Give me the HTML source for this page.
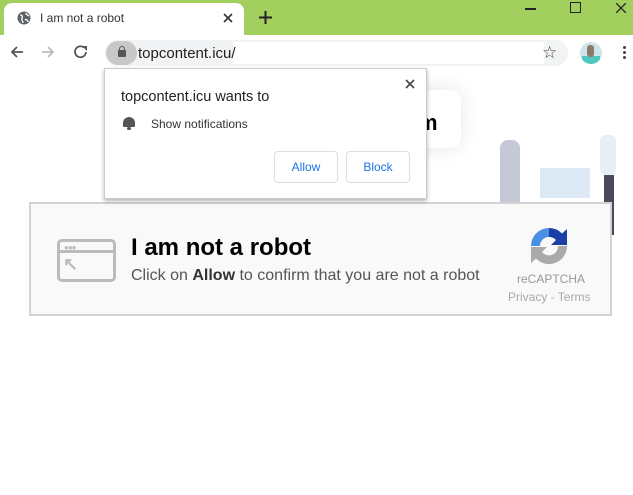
<!DOCTYPE html><html><head><style>
body{margin:0;width:633px;height:495px;position:relative;overflow:hidden;background:#fff;font-family:"Liberation Sans",Arial,sans-serif}
.a{position:absolute}
</style></head><body>
<div class="a" style="left:0;top:0;width:633px;height:35px;background:#a3cf5f"></div>
<div class="a" style="left:4px;top:3px;width:240px;height:32px;background:#fff;border-radius:8px 8px 0 0"></div>
<svg class="a" style="left:17px;top:11px" width="14" height="14" viewBox="0 0 14 14"><circle cx="7" cy="7" r="6.5" fill="#5f6368"/><path d="M3 4c2 0 3 1 2 3s1 3 1 5M9 2c0 2 2 2 3 3M8 9c1-1 3 0 3 2" stroke="#fff" stroke-width="1.3" fill="none"/></svg>
<div class="a" style="left:40px;top:11px;font-size:12px;color:#333">I am not a robot</div>
<svg class="a" style="left:223px;top:13px" width="10" height="10"><path d="M1 1L9 9M9 1L1 9" stroke="#333" stroke-width="1.6"/></svg>
<svg class="a" style="left:259px;top:11px" width="13" height="13"><path d="M6.5 0V13M0 6.5H13" stroke="#222" stroke-width="2"/></svg>
<div class="a" style="left:525px;top:8px;width:11px;height:1.5px;background:#222"></div>
<div class="a" style="left:570px;top:2px;width:9px;height:9px;border:1.5px solid #222"></div>
<svg class="a" style="left:616px;top:3px" width="10" height="10"><path d="M0 0L10 10M10 0L0 10" stroke="#222" stroke-width="1.3"/></svg>
<svg class="a" style="left:9px;top:44px" width="16" height="16"><path d="M14 8H3M8 3L3 8l5 5" stroke="#555" stroke-width="1.8" fill="none"/></svg>
<svg class="a" style="left:40px;top:44px" width="16" height="16"><path d="M2 8H13M8 3l5 5-5 5" stroke="#bbb" stroke-width="1.8" fill="none"/></svg>
<svg class="a" style="left:73px;top:44px" width="16" height="16"><path d="M13 8A5.5 5.5 0 1 1 11 3.5" stroke="#555" stroke-width="1.8" fill="none"/><path d="M9 2h5v5z" fill="#555"/></svg>
<div class="a" style="left:105px;top:40px;width:463px;height:26px;border-radius:13px;background:#f1f3f4"></div>
<div class="a" style="left:233px;top:42px;width:311px;height:22px;background:#fff"></div>
<div class="a" style="left:106px;top:41px;width:31px;height:24px;border-radius:12px;background:#c8c8c8"></div>
<div class="a" style="left:118px;top:50px;width:8px;height:7px;background:#555;border-radius:1px"></div>
<div class="a" style="left:119px;top:46px;width:4px;height:5px;border:1.5px solid #555;border-bottom:none;border-radius:3px 3px 0 0"></div>
<div class="a" style="left:138px;top:45px;font-size:15px;color:#222">topcontent.icu/</div>
<div class="a" style="left:542px;top:43px;font-size:17px;color:#444">☆</div>
<div class="a" style="left:580px;top:42px;width:22px;height:22px;border-radius:50%;background:#cfe3e8;overflow:hidden"><div style="margin:14px 0 0 2px;width:18px;height:8px;background:#4fc6c0"></div></div>
<div class="a" style="left:587px;top:45px;width:7px;height:12px;background:#8a7a6a;border-radius:3px"></div>
<div class="a" style="left:623px;top:46px;width:3px;height:3px;background:#444;border-radius:50%;box-shadow:0 5px #444,0 10px #444"></div>
<div class="a" style="left:395px;top:90px;width:66px;height:58px;background:#fff;border-radius:10px;box-shadow:0 0 20px rgba(0,0,0,.1)"></div>
<div class="a" style="left:418px;top:110px;font-size:22px;font-weight:bold">m</div>
<div class="a" style="left:500px;top:140px;width:20px;height:70px;background:#c5c9d6;border-radius:8px"></div>
<div class="a" style="left:540px;top:168px;width:50px;height:30px;background:#dde9f4"></div>
<div class="a" style="left:600px;top:135px;width:16px;height:40px;background:#e8eef6;border-radius:6px"></div>
<div class="a" style="left:604px;top:175px;width:10px;height:60px;background:#4a4a5a"></div>
<div class="a" style="left:104px;top:68px;width:321px;height:129px;background:#fff;border:1px solid #ccc;box-shadow:0 2px 4px rgba(0,0,0,.3);z-index:2">
<svg class="a" style="left:300px;top:10px" width="10" height="10"><path d="M1 1L9 9M9 1L1 9" stroke="#444" stroke-width="1.6"/></svg>
<div class="a" style="left:16px;top:20px;font-size:14.5px;color:#222">topcontent.icu wants to</div>
<div class="a" style="left:18px;top:48px;width:12px;height:10px;background:#555;border-radius:6px 6px 1px 1px"></div>
<div class="a" style="left:22px;top:58px;width:4px;height:3px;background:#555;border-radius:2px"></div>
<div class="a" style="left:46px;top:48px;font-size:12px;color:#333">Show notifications</div>
<div class="a" style="left:169px;top:82px;width:62px;height:30px;border:1px solid #ddd;border-radius:4px;color:#1a73e8;font-size:12px;text-align:center;line-height:30px">Allow</div>
<div class="a" style="left:241px;top:82px;width:62px;height:30px;border:1px solid #ddd;border-radius:4px;color:#1a73e8;font-size:12px;text-align:center;line-height:30px">Block</div>
</div>
<div class="a" style="left:29px;top:202px;width:579px;height:110px;background:#f9f9f9;border:2px solid #d3d3d3">
<div class="a" style="left:26px;top:35px;width:53px;height:37px;border:3px solid #bbb;border-radius:5px"></div>
<div class="a" style="left:29px;top:46px;width:53px;height:3px;background:#bbb"></div>
<div class="a" style="left:33px;top:39px;font-size:8px;color:#bbb;letter-spacing:-1px">●●●</div>
<div class="a" style="left:32px;top:50px;font-size:18px;color:#bbb;font-weight:bold">↖</div>
<div class="a" style="left:100px;top:30px;font-size:24px;font-weight:bold;color:#000">I am not a robot</div>
<div class="a" style="left:100px;top:63px;font-size:16px;color:#555">Click on <b style="color:#333">Allow</b> to confirm that you are not a robot</div>
<svg class="a" style="left:496px;top:20px" width="44" height="44" viewBox="0 0 44 44"><path d="M4 22A18 18 0 0 1 22 4v9a9 9 0 0 0-9 9z" fill="#4a90e2"/><path d="M22 4a18 18 0 0 1 13 5.5L40 5v16H24l5-5A9 9 0 0 0 22 13z" fill="#1a3fa6"/><path d="M40 22a18 18 0 0 1-31 12.5L4 39V23h16l-5 5a9 9 0 0 0 16-6z" fill="#aaa"/></svg>
<div class="a" style="left:486px;top:68px;font-size:12px;color:#999">reCAPTCHA</div>
<div class="a" style="left:477px;top:86px;font-size:12px;color:#aaa;width:82px;overflow:hidden;white-space:nowrap">Privacy - Terms</div>
</div>
</body></html>
